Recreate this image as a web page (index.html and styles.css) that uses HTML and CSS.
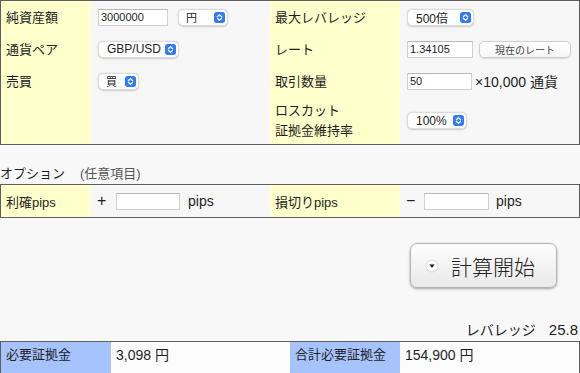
FILE: index.html
```
<!DOCTYPE html>
<html lang="ja">
<head>
<meta charset="utf-8">
<title>証拠金計算</title>
<link rel="stylesheet" href="styles.css">
</head>
<body>
<div class="panel">
  <div class="lab">純資産額</div>
  <div class="val">
    <span class="inp w70">3000000</span>
    <span class="sel s-yen">円<svg class="arr" viewBox="0 0 12 12"><rect width="12" height="12" rx="3" fill="#2f7cf6"/><path d="M3.7 5.1 6 2.9 8.3 5.1M3.7 6.9 6 9.1 8.3 6.9" fill="none" stroke="#fff" stroke-width="1.4" stroke-linecap="round" stroke-linejoin="round"/></svg></span>
  </div>
  <div class="lab">最大レバレッジ</div>
  <div class="val">
    <span class="sel s-lev">500倍<svg class="arr" viewBox="0 0 12 12"><rect width="12" height="12" rx="3" fill="#2f7cf6"/><path d="M3.7 5.1 6 2.9 8.3 5.1M3.7 6.9 6 9.1 8.3 6.9" fill="none" stroke="#fff" stroke-width="1.4" stroke-linecap="round" stroke-linejoin="round"/></svg></span>
  </div>

  <div class="lab">通貨ペア</div>
  <div class="val">
    <span class="sel s-pair">GBP/USD<svg class="arr" viewBox="0 0 12 12"><rect width="12" height="12" rx="3" fill="#2f7cf6"/><path d="M3.7 5.1 6 2.9 8.3 5.1M3.7 6.9 6 9.1 8.3 6.9" fill="none" stroke="#fff" stroke-width="1.4" stroke-linecap="round" stroke-linejoin="round"/></svg></span>
  </div>
  <div class="lab">レート</div>
  <div class="val">
    <span class="inp w66">1.34105</span>
    <span class="btn">現在のレート</span>
  </div>

  <div class="lab">売買</div>
  <div class="val">
    <span class="sel s-side">買<svg class="arr" viewBox="0 0 12 12"><rect width="12" height="12" rx="3" fill="#2f7cf6"/><path d="M3.7 5.1 6 2.9 8.3 5.1M3.7 6.9 6 9.1 8.3 6.9" fill="none" stroke="#fff" stroke-width="1.4" stroke-linecap="round" stroke-linejoin="round"/></svg></span>
  </div>
  <div class="lab">取引数量</div>
  <div class="val">
    <span class="inp w65">50</span>
    <span class="unit">×10,000 通貨</span>
  </div>

  <div class="lab"></div>
  <div class="val"></div>
  <div class="lab two">ロスカット<br>証拠金維持率</div>
  <div class="val">
    <span class="sel s-pct">100%<svg class="arr" viewBox="0 0 12 12"><rect width="12" height="12" rx="3" fill="#2f7cf6"/><path d="M3.7 5.1 6 2.9 8.3 5.1M3.7 6.9 6 9.1 8.3 6.9" fill="none" stroke="#fff" stroke-width="1.4" stroke-linecap="round" stroke-linejoin="round"/></svg></span>
  </div>
</div>

<div class="opt-head">オプション<span class="opt-note">(任意項目)</span></div>

<div class="panel opts">
  <div class="lab">利確pips</div>
  <div class="val vo">
    <span class="sign s1">+</span>
    <span class="inp w64"></span>
    <span class="pips">pips</span>
  </div>
  <div class="lab">損切りpips</div>
  <div class="val vo">
    <span class="sign s2">−</span>
    <span class="inp w65"></span>
    <span class="pips p2">pips</span>
  </div>
</div>

<div class="actions">
  <button class="calc" type="button">
    <svg class="calc-ico" viewBox="0 0 14 14"><circle cx="7" cy="7" r="6" fill="#fff" stroke="#d0d0d0" stroke-width="0.8"/><path d="M4.3 5.6h5.4L7 8.8z" fill="#111"/></svg>
    <span>計算開始</span>
  </button>
</div>

<div class="lev">レバレッジ<span class="lev-num">25.8</span></div>

<div class="result">
  <div class="rlab">必要証拠金</div>
  <div class="rval">3,098 円</div>
  <div class="rlab">合計必要証拠金</div>
  <div class="rval">154,900 円</div>
</div>
</body>
</html>
```
FILE: styles.css
```
html { overflow: hidden; }
body {
  margin: 0;
  background: #f8f8f8;
  color: #1e1e1e;
  font-family: "Liberation Sans", "Noto Sans CJK JP", sans-serif;
  font-size: 13px;
}
.panel {
  display: grid;
  grid-template-columns: 90px 179px 130px 179px;
  grid-template-rows: 32px 32px 32px 47px;
  border: 1px solid #5e5e5e;
  background: #f7f7f7;
}
.lab {
  background: #ffffcc;
  padding: 0 0 2px 5px;
  display: flex;
  align-items: center;
}
.lab.two { line-height: 20px; padding: 0 0 0 5px; }
.val {
  padding-left: 7px;
  display: flex;
  align-items: center;
}
.inp {
  box-sizing: border-box;
  height: 17px;
  background: #fff;
  border: 1px solid #d0d0d0;
  border-top-color: #b8b8b8;
  font-size: 11px;
  line-height: 15px;
  padding-left: 2px;
}
.w70 { width: 70px; }
.w66 { width: 66px; }
.w65 { width: 65px; }
.w64 { width: 64px; }
.sel {
  box-sizing: border-box;
  height: 17px;
  background: #fff;
  border: 1px solid #dcdcdc;
  border-radius: 5px;
  box-shadow: 0 0.5px 1.5px rgba(0,0,0,0.18);
  display: flex;
  align-items: center;
  justify-content: space-between;
  padding: 0 2px 0 7px;
  font-size: 11px;
  color: #222;
}
.s-yen { width: 50px; margin-left: 10px; }
.s-pair { width: 81px; font-size: 12px; padding-left: 8px; }
.s-side { width: 41px; padding-left: 7px; }
.s-lev { width: 67px; font-size: 12px; padding-left: 8px; }
.s-pct { width: 60px; font-size: 12px; padding-left: 8px; }
.arr { width: 11px; height: 11px; display: block; }
.btn {
  box-sizing: border-box;
  width: 92px;
  height: 17px;
  margin-left: 6px;
  border: 1px solid #cfcfcf;
  border-radius: 5px;
  background: linear-gradient(#ffffff, #f6f6f6);
  box-shadow: 0 0.5px 1px rgba(0,0,0,0.12);
  font-size: 10px;
  color: #444;
  display: flex;
  align-items: center;
  justify-content: center;
}
.unit { margin-left: 3px; font-size: 14px; }
.opt-head {
  padding-top: 18px;
  line-height: 21px;
}
.opt-note { margin-left: 15px; color: #555; }
.opts { grid-template-rows: 32px; }
.opts .lab { padding-bottom: 0; }
.vo { padding-left: 6px; }
.sign { display: inline-block; font-size: 16px; }
.s1 { width: 19px; }
.s2 { width: 18px; }
.pips { margin-left: 8px; font-size: 14px; }
.p2 { margin-left: 7px; }
.actions {
  display: flex;
  justify-content: flex-end;
  padding: 25px 23px 0 0;
}
.calc {
  box-sizing: border-box;
  width: 147px;
  height: 45px;
  border: 1px solid #b4b4b4;
  border-radius: 7px;
  background: linear-gradient(#fefefe, #e9e9e9);
  box-shadow: 0 1px 2.5px rgba(0,0,0,0.35);
  display: flex;
  align-items: center;
  padding: 0 0 0 14px;
  gap: 12px;
  font-family: "Noto Sans CJK JP", sans-serif;
  font-size: 21px;
  font-weight: 300;
  color: #222;
}
.calc-ico { width: 14px; height: 14px; display: block; }
.lev {
  padding-top: 33px;
  line-height: 18px;
  text-align: right;
  padding-right: 2px;
  font-size: 14px;
}
.lev-num { margin-left: 13px; font-size: 15px; }
.result {
  margin-top: 2px;
  display: grid;
  grid-template-columns: 110px 179px 110px 179px;
  grid-template-rows: 32px;
  border: 1px solid #5e5e5e;
  background: #fff;
}
.rlab {
  background: #a6c3fd;
  padding: 4px 0 0 5px;
  line-height: 18px;
}
.rval {
  padding: 4px 0 0 5px;
  line-height: 18px;
  background: #fcfcfc;
  font-size: 14px;
}
```
